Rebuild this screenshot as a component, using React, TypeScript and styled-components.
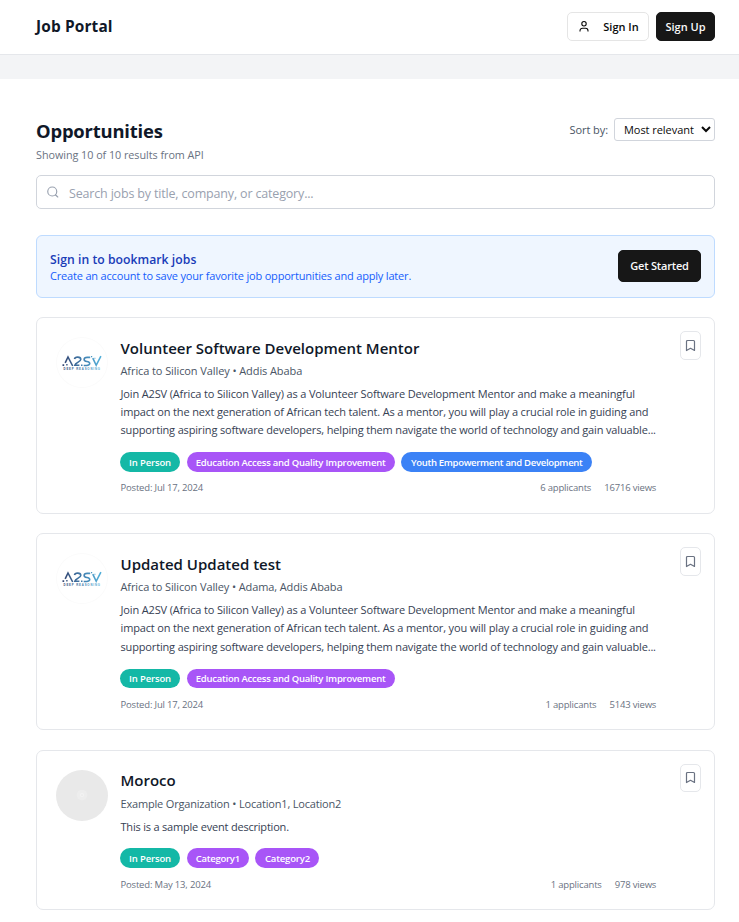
import React from 'react';
import styled, { createGlobalStyle } from 'styled-components';

const GlobalStyle = createGlobalStyle`
  *, *::before, *::after { box-sizing: border-box; }
  body { margin: 0; background: #fff; color: #030712; font-family: 'Open Sans', 'Noto Sans', sans-serif; font-size: 11.375px; overflow: hidden; }
  h1, h2, h3, p { margin: 0; }
  button, input, select { font-family: inherit; }
`;

const Page = styled.div`
  height: 922px;
  overflow: hidden;
`;

const Header = styled.header`
  height: 55px;
  padding: 0 24px 1px 36px;
  display: flex;
  align-items: center;
  justify-content: space-between;
  border-bottom: 1px solid #e5e7eb;
`;

const Brand = styled.h1`
  font-size: 15.4px;
  line-height: 22px;
  font-weight: 700;
  letter-spacing: 0.15px;
  color: #101828;
`;

const Actions = styled.div`
  display: flex;
  gap: 7px;
`;

const Button = styled.button<{ $outline?: boolean; $w: number; $h: number }>`
  width: ${p => p.$w}px;
  height: ${p => p.$h}px;
  padding: 0 0 1px 0;
  display: flex;
  align-items: center;
  justify-content: center;
  gap: 13px;
  white-space: nowrap;
  border-radius: 5px;
  border: 1px solid ${p => (p.$outline ? '#e5e5e5' : '#171717')};
  background: ${p => (p.$outline ? '#fff' : '#171717')};
  color: ${p => (p.$outline ? '#0a0a0a' : '#fafafa')};
  font-size: 11px;
  font-weight: 600;
  letter-spacing: ${p => (p.$h > 30 ? -0.2 : 0)}px;
`;

const Band = styled.div`
  height: 24px;
  background: #f3f4f6;
`;

const Main = styled.main`
  padding: 39px 24px 0 36px;
`;

const Heading = styled.div`
  display: flex;
  justify-content: space-between;
  align-items: flex-start;
  height: 57px;
`;

const Title = styled.h2`
  font-size: 18.4px;
  line-height: 26px;
  font-weight: 700;
  letter-spacing: -0.18px;
  color: #101828;
`;

const Count = styled.p`
  margin-top: 3px;
  font-size: 10.8px;
  line-height: 16px;
  letter-spacing: -0.04px;
  color: #6a7282;
`;

const Sort = styled.label`
  display: flex;
  align-items: center;
  gap: 6px;
  font-size: 11px;
  letter-spacing: -0.08px;
  color: #4a5565;
`;

const Select = styled.select`
  width: 101px;
  height: 23px;
  padding: 0 0 0 5px;
  border: 1px solid #d1d5dc;
  border-radius: 3px;
  background: #fff;
  color: #0a0a0a;
  font-size: 11px;
  letter-spacing: -0.05px;
`;

const SearchBox = styled.div`
  height: 34px;
  padding: 0 10px 0 9.5px;
  display: flex;
  align-items: center;
  gap: 10.5px;
  border: 1px solid #d1d5dc;
  border-radius: 5px;
`;

const SearchInput = styled.input`
  flex: 1;
  border: 0;
  padding: 2px 0 0;
  outline: 0;
  background: transparent;
  font-size: 12.5px;
  letter-spacing: -0.17px;
  &::placeholder { color: #99a1af; opacity: 1; }
`;

const Banner = styled.section`
  height: 63px;
  margin-top: 26px;
  padding: 0 13px 1px;
  display: flex;
  align-items: center;
  justify-content: space-between;
  background: #eff6ff;
  border: 1px solid #bedbff;
  border-radius: 6px;
`;

const BannerTitle = styled.h3`
  padding-top: 2px;
  font-size: 12.2px;
  line-height: 17px;
  font-weight: 600;
  letter-spacing: 0.04px;
  color: #193cb8;
`;

const BannerText = styled.p`
  font-size: 11px;
  line-height: 16px;
  letter-spacing: -0.18px;
  color: #155dfc;
`;

const List = styled.div`
  margin-top: 19.1px;
  display: flex;
  flex-direction: column;
  gap: 19.4px;
`;

const Card = styled.article`
  position: relative;
  display: flex;
  gap: 12.5px;
  padding: 19.8px 57.8px 18.6px 19px;
  border: 1px solid #e5e7eb;
  border-radius: 7px;
`;

const Avatar = styled.div<{ $empty?: boolean }>`
  flex: none;
  width: 52px;
  height: 51px;
  margin-top: -0.8px;
  border-radius: 50%;
  background: ${p => (p.$empty ? '#e9e9e9' : '#fff')};
  box-shadow: ${p => (p.$empty ? 'none' : 'inset 0 0 0 1px #fbfbfb')};
  display: flex;
  align-items: center;
  justify-content: center;
`;

const Body = styled.div`
  flex: 1;
  min-width: 0;
  white-space: nowrap;
`;

const JobTitle = styled.h3`
  margin-top: -1px;
  padding-bottom: 1px;
  font-size: 15px;
  line-height: 22.75px;
  font-weight: 600;
  color: #101828;
`;

const Org = styled.p<{ $ls: number }>`
  margin-top: 2.5px;
  font-size: 11px;
  line-height: 16.25px;
  letter-spacing: ${p => p.$ls}px;
  color: #4a5565;
`;

const Desc = styled.div`
  margin-top: 5.6px;
  font-size: 11px;
  line-height: 18.2px;
  color: #364153;
`;

const Line = styled.p<{ $ls: number }>`
  letter-spacing: ${p => p.$ls}px;
`;

const Tags = styled.div`
  margin: 12.7px 0 9.6px -0.5px;
  display: flex;
  gap: 6.6px;
`;

const tones = { teal: '#14b8a6', purple: '#a855f7', blue: '#3b82f6' };

const Tag = styled.span<{ $tone: keyof typeof tones; $w: number; $ls: number }>`
  width: ${p => p.$w}px;
  height: 19.5px;
  display: flex;
  align-items: center;
  justify-content: center;
  border-radius: 10px;
  background: ${p => tones[p.$tone]};
  color: #fff;
  font-size: 9.5px;
  font-weight: 600;
  letter-spacing: ${p => p.$ls}px;
`;

const Meta = styled.div`
  display: flex;
  justify-content: space-between;
  font-size: 9.5px;
  line-height: 13px;
  letter-spacing: -0.18px;
  color: #6a7282;
`;

const Stats = styled.div`
  display: flex;
  gap: 13px;
`;

const Bookmark = styled.button`
  position: absolute;
  top: 13px;
  right: 13px;
  width: 21px;
  height: 28.5px;
  padding: 0;
  display: flex;
  align-items: center;
  justify-content: center;
  border: 1px solid #e5e7eb;
  border-radius: 5px;
  background: #fff;
  color: #6a7282;
`;

const UserIcon = () => (
  <svg width="13" height="13" viewBox="0 0 26 26" fill="none" stroke="currentColor" strokeWidth="2.2">
    <circle cx="14" cy="7.5" r="4.4" />
    <path d="M6 23v-1.5a5 5 0 0 1 5-5h6a5 5 0 0 1 5 5V23" />
  </svg>
);

const SearchIcon = () => (
  <svg width="12" height="13" viewBox="0 0 24 26" fill="none" stroke="#99a1af" strokeWidth="2.3" strokeLinecap="round">
    <circle cx="10.5" cy="11" r="9" />
    <path d="m21.5 22-4.5-4.5" />
  </svg>
);

const BookmarkIcon = () => (
  <svg width="13" height="13" viewBox="0 0 26 26" fill="none" stroke="currentColor" strokeWidth="2.4" strokeLinejoin="round">
    <path d="M5 5a2 2 0 0 1 2-2h12a2 2 0 0 1 2 2v18l-8-4.5L5 23z" />
  </svg>
);

const Logo = ({ id }: { id: string }) => (
  <svg width="40" height="18" viewBox="0 0 40 18" fill="none">
    <defs>
      <linearGradient id={id} gradientUnits="userSpaceOnUse" x1="0" y1="0" x2="40" y2="0">
        <stop offset="0" stopColor="#34436f" />
        <stop offset="0.55" stopColor="#4282b2" />
        <stop offset="1" stopColor="#55b3dc" />
      </linearGradient>
    </defs>
    <g stroke={`url(#${id})`} strokeWidth="1.6">
      <path d="M3.2 8.8 6 3l4.7 9M12.5 5c.4-2.4 6.3-2.7 6.3.5 0 2.2-5.4 3-5.9 5.7h4.5M28.2 3.4h-3c-4 0-4 3.7-.4 4.1 4.4.5 3.5 4-.2 4h-2.9M30.8 4.2l3.4 7.1L38.9 2.2" />
    </g>
    <g fill={`url(#${id})`}>
      <path d="M.5 10.2h1.7v1.7H.5zM4.2 10h1.4v1.4H4.2zM19 10.4h1.5v1.5H19zM29 2h1.2v1.2H29zM32.4 3.8h1v1h-1z" />
    </g>
    <text x="1.5" y="16" textLength="36.5" fontFamily="Liberation Sans, sans-serif" fontSize="2.8" fontWeight="700" fill={`url(#${id})`}>DEEP REASONING</text>
  </svg>
);

const Placeholder = () => (
  <svg width="14" height="14" viewBox="0 0 14 14">
    <circle cx="7" cy="7" r="5.3" fill="#ededed" />
    <circle cx="7" cy="7" r="2" fill="#f2f2f2" />
    <circle cx="7" cy="7" r="0.6" fill="#dedede" />
  </svg>
);

type TagData = [text: string, tone: keyof typeof tones, width: number, spacing: number];
interface Job {
  title: string; org: string; orgSpacing: number; lines: [string, number][]; tags: TagData[];
  posted: string; applicants: string; views: string; logo: boolean;
}

const mentorLines: [string, number][] = [
  ['Join A2SV (Africa to Silicon Valley) as a Volunteer Software Development Mentor and make a meaningful', -0.145],
  ['impact on the next generation of African tech talent. As a mentor, you will play a crucial role in guiding and', -0.15],
  ['supporting aspiring software developers, helping them navigate the world of technology and gain valuable...', -0.155],
];

const inPerson: TagData = ['In Person', 'teal', 60, -0.15];
const education: TagData = ['Education Access and Quality Improvement', 'purple', 208, -0.24];

const jobs: Job[] = [
  {
    title: 'Volunteer Software Development Mentor', org: 'Africa to Silicon Valley • Addis Ababa', orgSpacing: -0.09, lines: mentorLines,
    tags: [inPerson, education, ['Youth Empowerment and Development', 'blue', 191, -0.3]],
    posted: 'Jul 17, 2024', applicants: '6 applicants', views: '16716 views', logo: true,
  },
  {
    title: 'Updated Updated test', org: 'Africa to Silicon Valley • Adama, Addis Ababa', orgSpacing: -0.11, lines: mentorLines,
    tags: [inPerson, education],
    posted: 'Jul 17, 2024', applicants: '1 applicants', views: '5143 views', logo: true,
  },
  {
    title: 'Moroco', org: 'Example Organization • Location1, Location2', orgSpacing: -0.18, lines: [['This is a sample event description.', -0.2]],
    tags: [inPerson, ['Category1', 'purple', 62.3, -0.25], ['Category2', 'purple', 64, -0.15]],
    posted: 'May 13, 2024', applicants: '1 applicants', views: '978 views', logo: false,
  },
];

export default function App() {
  return (
    <Page>
      <GlobalStyle />
      <Header>
        <Brand>Job Portal</Brand>
        <Actions>
          <Button $outline $w={82} $h={29}><UserIcon />Sign In</Button>
          <Button $w={59} $h={29}>Sign Up</Button>
        </Actions>
      </Header>
      <Band />
      <Main>
        <Heading>
          <div>
            <Title>Opportunities</Title>
            <Count>Showing 10 of 10 results from API</Count>
          </div>
          <Sort>
            Sort by:
            <Select defaultValue="relevant"><option value="relevant">Most relevant</option></Select>
          </Sort>
        </Heading>
        <SearchBox>
          <SearchIcon />
          <SearchInput placeholder="Search jobs by title, company, or category..." />
        </SearchBox>
        <Banner>
          <div>
            <BannerTitle>Sign in to bookmark jobs</BannerTitle>
            <BannerText>Create an account to save your favorite job opportunities and apply later.</BannerText>
          </div>
          <Button $w={83} $h={32}>Get Started</Button>
        </Banner>
        <List>
          {jobs.map((job, i) => (
            <Card key={job.title}>
              <Avatar $empty={!job.logo}>{job.logo ? <Logo id={`logo-${i}`} /> : <Placeholder />}</Avatar>
              <Body>
                <JobTitle>{job.title}</JobTitle>
                <Org $ls={job.orgSpacing}>{job.org}</Org>
                <Desc>{job.lines.map(([text, ls]) => <Line key={text} $ls={ls}>{text}</Line>)}</Desc>
                <Tags>{job.tags.map(([text, tone, w, ls]) => <Tag key={text} $tone={tone} $w={w} $ls={ls}>{text}</Tag>)}</Tags>
                <Meta>
                  <span>Posted: {job.posted}</span>
                  <Stats><span>{job.applicants}</span><span>{job.views}</span></Stats>
                </Meta>
              </Body>
              <Bookmark aria-label="Bookmark"><BookmarkIcon /></Bookmark>
            </Card>
          ))}
        </List>
      </Main>
    </Page>
  );
}
